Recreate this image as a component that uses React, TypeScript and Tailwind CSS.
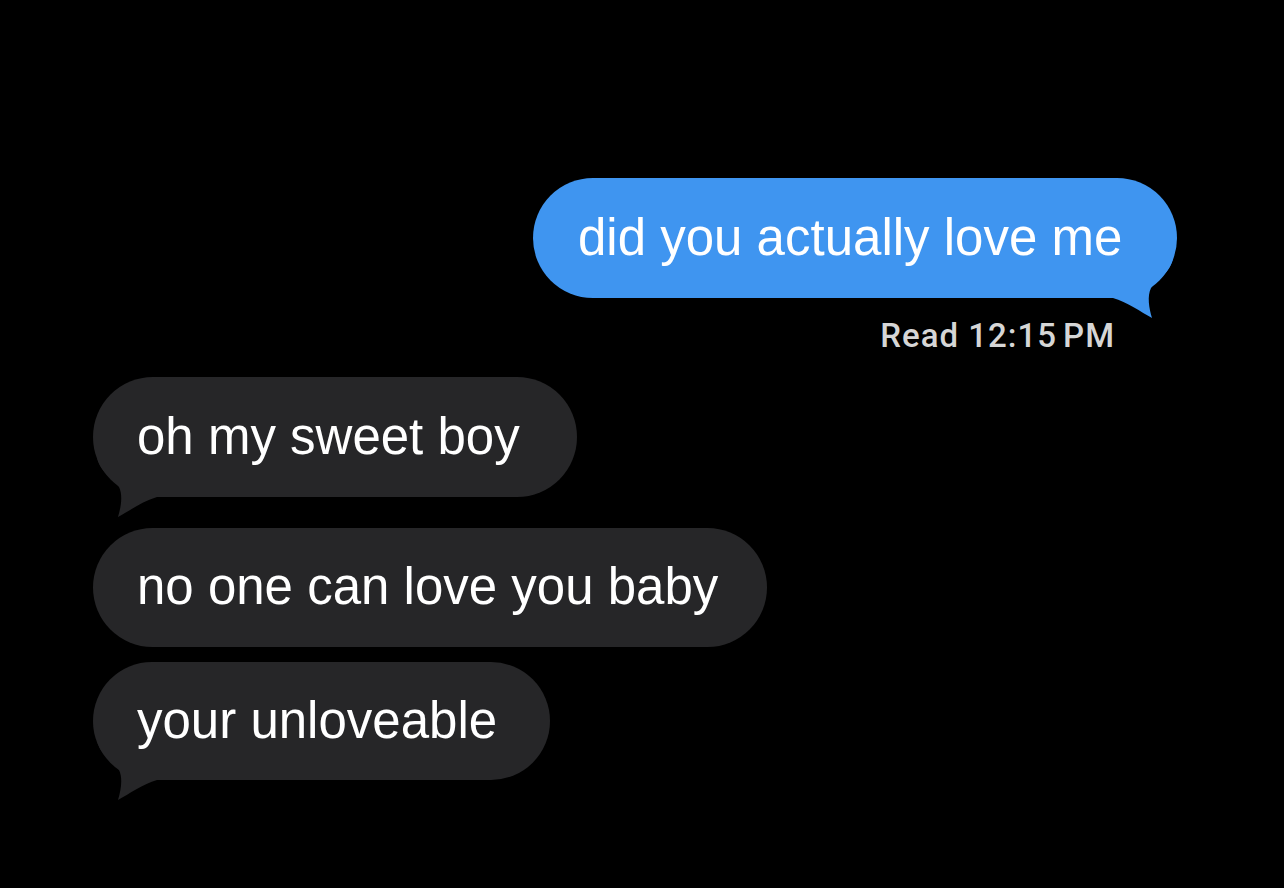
const BLUE = "#3f95f0";
const GRAY = "#262628";

// iMessage tail, sits over the bottom corner of the bubble
function TailRight({ color }: { color: string }) {
  return (
    <svg className="absolute right-0 bottom-[-22px]" width="70" height="62" viewBox="0 0 70 62">
      <path
        d="M66 0 C64 14 50 22 44 30 C40 38 42 50 45 60 C34 54 20 44 6 40 L6 0 Z"
        fill={color}
      />
    </svg>
  );
}

function TailLeft({ color }: { color: string }) {
  return (
    <svg className="absolute left-0 bottom-[-22px]" width="70" height="62" viewBox="0 0 70 62">
      <path
        d="M4 0 C6 14 20 22 26 30 C30 38 28 50 25 60 C36 54 50 44 64 40 L64 0 Z"
        fill={color}
      />
    </svg>
  );
}

function Received({ text, tail, cls }: { text: string; tail?: boolean; cls: string }) {
  return (
    <div className={`relative flex items-center rounded-full bg-[#262628] pl-[44px] ${cls}`}>
      <span className="relative z-10 whitespace-nowrap">{text}</span>
      {tail && <TailLeft color={GRAY} />}
    </div>
  );
}

export default function App() {
  return (
    <div
      className="h-[888px] w-full overflow-hidden bg-black pt-[178px] text-white"
      style={{ fontFamily: '"Liberation Sans", Arial, sans-serif' }}
    >
      <div className="flex justify-end pr-[107px]">
        <div className="relative flex h-[120px] w-[644px] items-center rounded-full bg-[#3f95f0] pl-[45px] text-[51px]">
          <span className="relative z-10 whitespace-nowrap">did you actually love me</span>
          <TailRight color={BLUE} />
        </div>
      </div>

      <div
        className="mt-[22px] flex justify-end pr-[169px] text-[33px] leading-[32px] font-medium tracking-[1px] text-[#d6d6d6]"
        style={{ fontFamily: 'Roboto, "Liberation Sans", sans-serif' }}
      >
        <span>Read 12:15</span>
        <span className="ml-[6px]">PM</span>
      </div>

      <div className="mt-[25px] flex flex-col items-start pl-[93px] text-[51px]">
        <Received text="oh my sweet boy" tail cls="h-[120px] w-[484px]" />
        <div className="mt-[31px]">
          <Received text="no one can love you baby" cls="h-[119px] w-[674px]" />
        </div>
        <div className="mt-[15px]">
          <Received text="your unloveable" tail cls="h-[118px] w-[457px]" />
        </div>
      </div>
    </div>
  );
}
